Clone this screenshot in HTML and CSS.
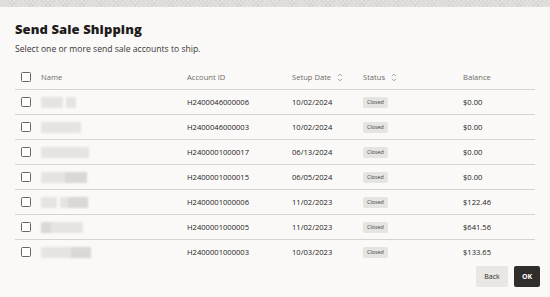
FILE: index.html
```html
<!DOCTYPE html>
<html lang="en">
<head>
  <meta charset="UTF-8" />
  <title>Send Sale Shipping</title>
  <link rel="stylesheet" href="styles.css">
</head>
<body>
  <div class="backdrop"></div>

  <div class="dialog">
    <h1 class="dialog-title">Send Sale Shipping</h1>
    <p class="dialog-text">Select one or more send sale accounts to ship.</p>

    <table class="accounts">
      <colgroup>
        <col class="col-check">
        <col class="col-name">
        <col class="col-id">
        <col class="col-date">
        <col class="col-status">
        <col class="col-balance">
      </colgroup>
      <thead>
        <tr>
          <th><span class="check"></span></th>
          <th>Name</th>
          <th>Account ID</th>
          <th>Setup Date <svg class="sort" viewBox="0 0 6 9"><path d="M1 3.2 3 1.2 5 3.2M1 5.8 3 7.8 5 5.8"/></svg></th>
          <th>Status <svg class="sort" viewBox="0 0 6 9"><path d="M1 3.2 3 1.2 5 3.2M1 5.8 3 7.8 5 5.8"/></svg></th>
          <th>Balance</th>
        </tr>
      </thead>
      <tbody>
        <tr>
          <td><span class="check"></span></td>
          <td><span class="blur"><i style="width:14px"></i><i style="width:8px"></i><i style="width:10px" class="gap"></i></span></td>
          <td>H2400046000006</td>
          <td>10/02/2024</td>
          <td><span class="badge">Closed</span></td>
          <td>$0.00</td>
        </tr>
        <tr>
          <td><span class="check"></span></td>
          <td><span class="blur"><i style="width:12px"></i><i style="width:18px"></i><i style="width:10px"></i></span></td>
          <td>H2400046000003</td>
          <td>10/02/2024</td>
          <td><span class="badge">Closed</span></td>
          <td>$0.00</td>
        </tr>
        <tr>
          <td><span class="check"></span></td>
          <td><span class="blur"><i style="width:16px"></i><i style="width:14px"></i><i style="width:18px"></i></span></td>
          <td>H2400001000017</td>
          <td>06/13/2024</td>
          <td><span class="badge">Closed</span></td>
          <td>$0.00</td>
        </tr>
        <tr>
          <td><span class="check"></span></td>
          <td><span class="blur"><i style="width:14px"></i><i style="width:10px"></i><i style="width:22px" class="dark"></i></span></td>
          <td>H2400001000015</td>
          <td>06/05/2024</td>
          <td><span class="badge">Closed</span></td>
          <td>$0.00</td>
        </tr>
        <tr>
          <td><span class="check"></span></td>
          <td><span class="blur"><i style="width:16px"></i><i style="width:8px" class="gap"></i><i style="width:20px" class="dark"></i></span></td>
          <td>H2400001000006</td>
          <td>11/02/2023</td>
          <td><span class="badge">Closed</span></td>
          <td>$122.46</td>
        </tr>
        <tr>
          <td><span class="check"></span></td>
          <td><span class="blur"><i style="width:10px" class="dark"></i><i style="width:16px"></i><i style="width:16px"></i></span></td>
          <td>H2400001000005</td>
          <td>11/02/2023</td>
          <td><span class="badge">Closed</span></td>
          <td>$641.56</td>
        </tr>
        <tr>
          <td><span class="check"></span></td>
          <td><span class="blur"><i style="width:18px"></i><i style="width:12px"></i><i style="width:20px" class="dark"></i></span></td>
          <td>H2400001000003</td>
          <td>10/03/2023</td>
          <td><span class="badge">Closed</span></td>
          <td>$133.65</td>
        </tr>
      </tbody>
    </table>

    <div class="dialog-footer">
      <button class="btn btn-back">Back</button>
      <button class="btn btn-ok">OK</button>
    </div>
  </div>
</body>
</html>
```

FILE: styles.css
```css
body, html {
  margin: 0;
  padding: 0;
  background: #faf9f8;
  color: #1f1c1a;
  font-family: "Open Sans", "Noto Sans", sans-serif;
  overflow: hidden;
}
.backdrop {
  height: 7px;
  background:
    repeating-linear-gradient(45deg, rgba(0,0,0,0.04) 0 1px, transparent 1px 3px),
    repeating-linear-gradient(-45deg, rgba(0,0,0,0.04) 0 1px, transparent 1px 3px),
    #e4e2df;
}
.dialog {
  padding: 14px 15px 0 15px;
}
.dialog-title {
  margin: 0;
  font-size: 13px;
  line-height: 16px;
  font-weight: 800;
  letter-spacing: 0.1px;
}
.dialog-text {
  margin: 6px 0 0 0;
  font-size: 8.6px;
  line-height: 12px;
  color: #3a3633;
}
.accounts {
  width: 520px;
  margin-top: 10px;
  border-collapse: collapse;
  table-layout: fixed;
  font-size: 7.6px;
}
.col-check { width: 26px; }
.col-name { width: 146px; }
.col-id { width: 105px; }
.col-date { width: 71px; }
.col-status { width: 100px; }
.col-balance { width: 72px; }
.accounts th {
  height: 24px;
  padding: 0;
  text-align: left;
  font-weight: 400;
  color: #6f6b67;
  border-bottom: 1px solid #d6d3d0;
  white-space: nowrap;
}
.accounts td {
  height: 24px;
  padding: 0;
  border-bottom: 1px solid #d6d3d0;
  white-space: nowrap;
}
.accounts tbody tr:last-child td {
  border-bottom: none;
}
.check {
  display: block;
  width: 8px;
  height: 8px;
  margin-left: 6px;
  border: 1px solid #6a6561;
  border-radius: 1.5px;
  background: #fff;
}
.sort {
  width: 6px;
  height: 9px;
  margin-left: 4px;
  vertical-align: -2px;
  fill: none;
  stroke: #8a8581;
  stroke-width: 0.8;
}
.blur {
  display: inline-flex;
  height: 11px;
  vertical-align: middle;
  filter: blur(0.8px);
}
.blur i {
  display: block;
  height: 11px;
  background: #e6e4e2;
}
.blur i.gap {
  margin-left: 3px;
}
.blur i.dark {
  background: #dad7d4;
}
.badge {
  display: inline-block;
  padding: 0 4px;
  height: 11px;
  line-height: 11px;
  font-size: 5.4px;
  color: #433f3b;
  background: #e6e4e1;
  border-radius: 2px;
  vertical-align: middle;
}
.dialog-footer {
  display: flex;
  justify-content: flex-end;
  gap: 6px;
  margin-top: 2px;
  margin-right: -5px;
}
.btn {
  height: 21px;
  border: none;
  border-radius: 2px;
  padding: 0;
  font-family: inherit;
  font-size: 7px;
  cursor: pointer;
}
.btn-back {
  width: 32px;
  background: #e9e7e4;
  color: #2b2825;
}
.btn-ok {
  width: 26px;
  background: #312d2a;
  color: #fff;
  font-weight: 700;
}
```
